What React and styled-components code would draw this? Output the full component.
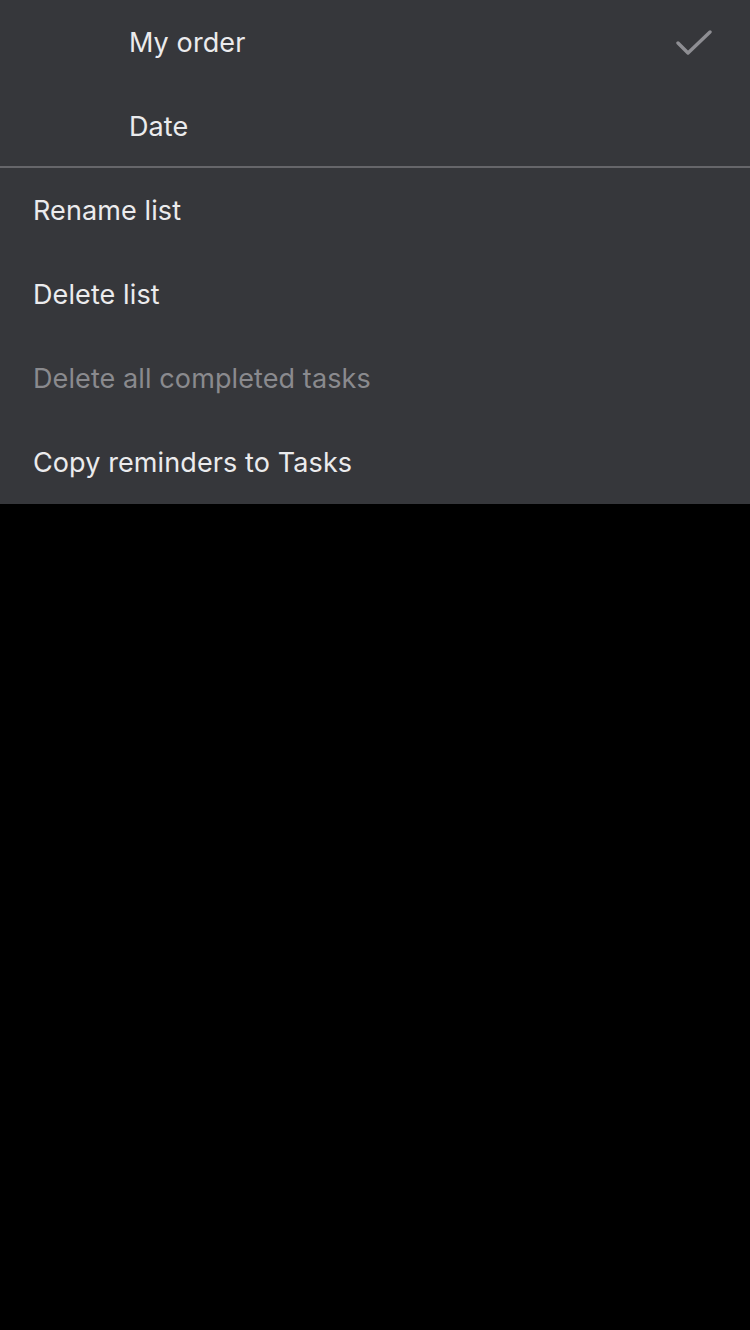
import React from 'react';
import styled, { createGlobalStyle } from 'styled-components';

const GlobalStyle = createGlobalStyle`
  html, body {
    margin: 0;
    padding: 0;
    background: #000;
  }
  body {
    font-family: Inter, Roboto, "Noto Sans", sans-serif;
    -webkit-font-smoothing: antialiased;
  }
`;

const Page = styled.div`
  width: 750px;
  height: 1330px;
  background: #000;
`;

const Menu = styled.div`
  background: #36373b;
  display: flex;
  flex-direction: column;
`;

const Row = styled.div`
  height: ${(p) => p.$height || 84}px;
  display: flex;
  align-items: center;
  justify-content: space-between;
  padding: ${(p) => p.$shift || 0}px 38px 0 ${(p) => (p.$indent ? 129 : 33)}px;
  box-sizing: border-box;
  font-size: 27px;
  letter-spacing: 0.1px;
  color: ${(p) => (p.$disabled ? '#8a8a8e' : '#ebebed')};
`;

const Divider = styled.div`
  height: 2px;
  background: #66666a;
`;

const Check = () => (
  <svg width="36" height="28" viewBox="0 0 36 28" fill="none">
    <path d="M2 14 L12 24 L34 3" stroke="#8e8e93" strokeWidth="3.4" strokeLinecap="round" strokeLinejoin="round" />
  </svg>
);

export default function App() {
  return (
    <Page>
      <GlobalStyle />
      <Menu>
        <Row $indent $shift={1}>
          <span>My order</span>
          <Check />
        </Row>
        <Row $indent $height={82} $shift={2}>
          <span>Date</span>
        </Row>
        <Divider />
        <Row>Rename list</Row>
        <Row>Delete list</Row>
        <Row $disabled>Delete all completed tasks</Row>
        <Row>Copy reminders to Tasks</Row>
      </Menu>
    </Page>
  );
}
